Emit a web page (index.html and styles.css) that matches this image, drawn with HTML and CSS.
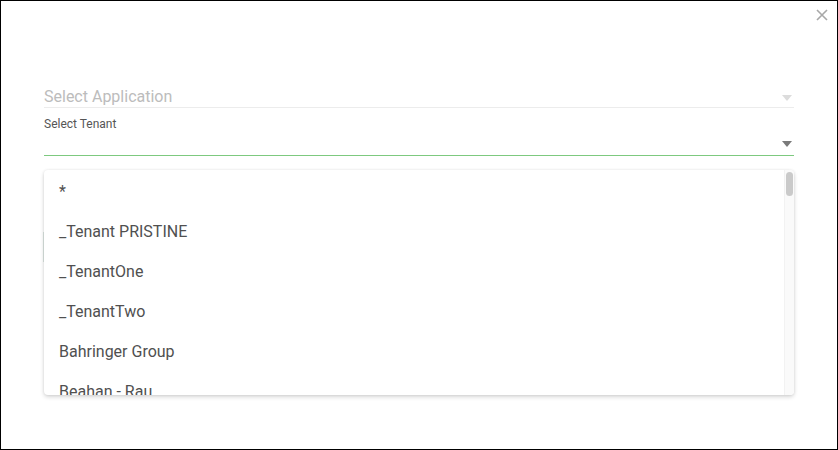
FILE: index.html
```html
<!DOCTYPE html>
<html lang="en">
<head>
<meta charset="utf-8">
<title>Select Tenant</title>
<link rel="stylesheet" href="styles.css">
</head>
<body>
<div class="frame">
  <button class="close" aria-label="Close">
    <svg width="12" height="12" viewBox="0 0 12 12"><path d="M1 1L11 11M11 1L1 11" stroke="#a8a8a8" stroke-width="1.6" fill="none"/></svg>
  </button>
  <div class="form">
    <div class="field field-app">
      <span class="placeholder">Select Application</span>
      <span class="caret caret-light"></span>
    </div>
    <div class="field-tenant">
      <div class="label">Select Tenant</div>
      <div class="tenant-input">
        <span class="caret caret-dark"></span>
      </div>
      <div class="focus-line"></div>
    </div>
    <div class="behind"></div>
  </div>
  <div class="menu">
    <ul class="items">
      <li>*</li>
      <li>_Tenant PRISTINE</li>
      <li>_TenantOne</li>
      <li>_TenantTwo</li>
      <li>Bahringer Group</li>
      <li>Beahan - Rau</li>
    </ul>
    <div class="track"><div class="thumb"></div></div>
  </div>
</div>
</body>
</html>
```

FILE: styles.css
```css
html, body {
  margin: 0;
  padding: 0;
  background: #fff;
}
body {
  font-family: Roboto, "Liberation Sans", sans-serif;
}
.frame {
  position: relative;
  width: 838px;
  height: 450px;
  box-sizing: border-box;
  border: 1px solid #000;
  background: #fff;
  overflow: hidden;
}
.close {
  position: absolute;
  top: 8px;
  right: 9px;
  width: 12px;
  height: 12px;
  padding: 0;
  border: 0;
  background: none;
  display: flex;
}
.form {
  padding: 85px 43px 0 43px;
  display: flex;
  flex-direction: column;
}
.field {
  display: flex;
  align-items: center;
  justify-content: space-between;
  height: 21px;
  border-bottom: 1px solid #ececec;
}
.placeholder {
  font-size: 16px;
  line-height: 21px;
  color: #bcbcbc;
  margin-top: -1px;
}
.caret {
  width: 0;
  height: 0;
  border-left: 5.5px solid transparent;
  border-right: 5.5px solid transparent;
  margin-right: 2px;
}
.caret-light {
  border-top: 6px solid #dcdcdc;
  margin-top: 2px;
}
.caret-dark {
  border-top: 6px solid #7a7a7a;
}
.field-tenant {
  margin-top: 9px;
  display: flex;
  flex-direction: column;
}
.label {
  font-size: 12px;
  line-height: 14px;
  color: #555;
}
.tenant-input {
  height: 24px;
  display: flex;
  align-items: center;
  justify-content: flex-end;
  box-sizing: border-box;
  padding-top: 2px;
}
.focus-line {
  height: 1px;
  flex: 0 0 1px;
  background: #7dc97f;
}
.behind {
  margin: 76px 0 0 -1px;
  height: 30px;
  border-left: 1px solid #dde6e2;
}
.menu {
  position: absolute;
  top: 169px;
  left: 43px;
  width: 750px;
  height: 225px;
  background: #fff;
  border-radius: 4px;
  box-shadow: 0 2px 4px rgba(0,0,0,0.16), 0 0 3px rgba(0,0,0,0.08);
  overflow: hidden;
}
.items {
  list-style: none;
  margin: 0;
  padding: 1px 0 0 0;
}
.items li {
  height: 40px;
  display: flex;
  align-items: center;
  padding-left: 15px;
  font-size: 16px;
  color: #505050;
}
.track {
  position: absolute;
  top: 0;
  right: 0;
  width: 10px;
  height: 100%;
  background: #fafafa;
  border-left: 1px solid #f2f2f2;
  box-sizing: border-box;
}
.thumb {
  margin: 2px 0 0 1px;
  width: 7px;
  height: 24px;
  border-radius: 4px;
  background: #cacaca;
}
```
